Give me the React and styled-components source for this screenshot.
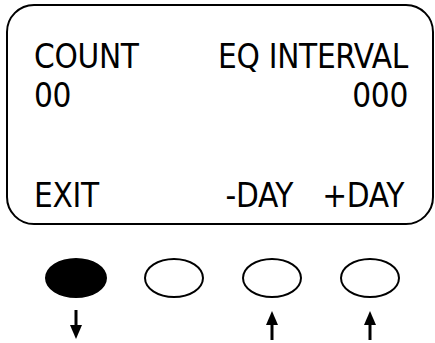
import React from "react";
import styled, { createGlobalStyle } from "styled-components";

const Global = createGlobalStyle`
  html, body { margin: 0; padding: 0; background: #fff; }
  body { font-family: "DejaVu Sans", Verdana, sans-serif; color: #000; }
`;

const Page = styled.div`
  width: 435px;
  height: 343px;
  box-sizing: border-box;
  padding: 4px 1px 0 6px;
  overflow: hidden;
`;

const Display = styled.div`
  box-sizing: border-box;
  height: 221px;
  border: 2px solid #000;
  border-radius: 28px;
  padding: 31px 24px 8px 26px;
  display: flex;
  flex-direction: column;
  font-family: "DejaVu Sans", Verdana, sans-serif;
  font-stretch: condensed;
  font-size: 33px;
  line-height: 39px;
  letter-spacing: -0.3px;
`;

const Row = styled.div`
  display: flex;
  justify-content: space-between;
  white-space: nowrap;
`;

const Spacer = styled.div`
  flex: 1;
`;

const SoftKeys = styled.div`
  display: flex;
  align-items: baseline;
  white-space: nowrap;
`;

const Right = styled.div`
  margin-left: auto;
  margin-right: 4px;
  display: flex;
  gap: 29px;
`;

const Controls = styled.div`
  display: grid;
  grid-template-columns: repeat(4, 98px);
  margin: 33px 0 0 21px;
`;

const Key = styled.div`
  display: flex;
  flex-direction: column;
  align-items: center;
  gap: 12px;
`;

const Oval = styled.div`
  box-sizing: border-box;
  width: ${(p) => (p.$filled ? 62 : 60)}px;
  height: 40px;
  border-radius: 50%;
  border: 2.5px solid #000;
  background: ${(p) => (p.$filled ? "#000" : "#fff")};
`;

const ArrowSlot = styled.div`
  width: 14px;
  height: 30px;
`;

const Arrow = ({ dir }) => (
  <svg width="14" height="30" viewBox="0 0 14 30">
    {dir === "down" ? (
      <>
        <line x1="7" y1="0" x2="7" y2="17" stroke="#000" strokeWidth="3" />
        <polygon points="1,15 13,15 7,29" fill="#000" />
      </>
    ) : (
      <>
        <polygon points="7,1 13,15 1,15" fill="#000" />
        <line x1="7" y1="13" x2="7" y2="30" stroke="#000" strokeWidth="3" />
      </>
    )}
  </svg>
);

const keys = [
  { filled: true, arrow: "down" },
  { filled: false, arrow: null },
  { filled: false, arrow: "up" },
  { filled: false, arrow: "up" },
];

export default function App() {
  return (
    <Page>
      <Global />
      <Display>
        <Row>
          <span>COUNT</span>
          <span>EQ INTERVAL</span>
        </Row>
        <Row>
          <span>00</span>
          <span>000</span>
        </Row>
        <Spacer />
        <SoftKeys>
          <span>EXIT</span>
          <Right>
            <span>-DAY</span>
            <span>+DAY</span>
          </Right>
        </SoftKeys>
      </Display>
      <Controls>
        {keys.map((k, i) => (
          <Key key={i}>
            <Oval $filled={k.filled} />
            <ArrowSlot>{k.arrow && <Arrow dir={k.arrow} />}</ArrowSlot>
          </Key>
        ))}
      </Controls>
    </Page>
  );
}
